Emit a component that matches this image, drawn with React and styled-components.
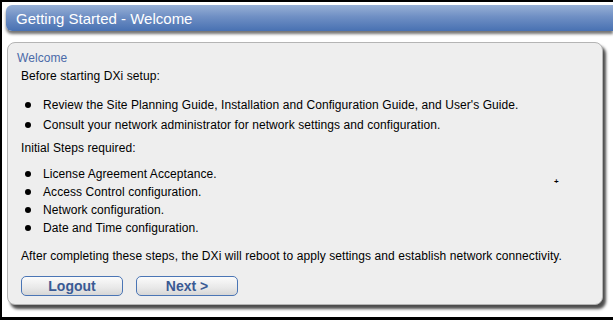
import styled, { createGlobalStyle } from "styled-components";

const GlobalStyle = createGlobalStyle`
  html, body {
    margin: 0;
    padding: 0;
    background: #000;
  }
  body {
    font-family: "Liberation Sans", Arial, sans-serif;
  }
`;

const Frame = styled.div`
  position: relative;
  width: 611px;
  height: 315px;
  margin: 2px 0 0 2px;
  background: #fff;
  overflow: hidden;
  padding-top: 3px;
  box-sizing: border-box;
`;

const Header = styled.div`
  margin-left: 4px;
  height: 26px;
  display: flex;
  align-items: center;
  padding-left: 10px;
  border-radius: 6px 0 0 6px;
  background: linear-gradient(#97b0d6, #6f8fc4 45%, #4871b2);
  box-shadow: 0 3px 3px rgba(0, 0, 0, 0.55);
  color: #fff;
  font-size: 15px;
`;

const Panel = styled.div`
  margin: 11px 0 0 5px;
  width: 596px;
  height: 263px;
  box-sizing: border-box;
  background: #eeeeee;
  border: 1px solid #b4b4b4;
  border-radius: 8px;
  box-shadow: 3px 4px 3px rgba(0, 0, 0, 0.7);
  padding: 8px 0 0 9px;
  font-size: 12px;
  letter-spacing: 0.08px;
  color: #000;
`;

const Title = styled.div`
  color: #4a6aa8;
  font-size: 12px;
  margin-bottom: 4px;
`;

const Para = styled.div`
  margin-left: 4px;
`;

const List = styled.ul`
  list-style: none;
  margin: ${(p) => p.$top}px 0 ${(p) => p.$bottom}px 0;
  padding: 0 0 0 8px;
`;

const Item = styled.li`
  display: flex;
  align-items: center;
  height: ${(p) => p.$h || 18}px;

  &::before {
    content: "";
    width: 6px;
    height: 6px;
    border-radius: 50%;
    background: #000;
    margin-right: 12px;
  }
`;

const Buttons = styled.div`
  display: flex;
  gap: 13px;
  margin: 13px 0 0 4px;
`;

const Button = styled.button`
  width: 102px;
  height: 20px;
  border: 1px solid #4a75b5;
  border-radius: 5px;
  background: linear-gradient(#fbfbfb, #e8e8e8 60%, #d6d6d6);
  color: #3a5a94;
  font-family: "Liberation Sans", Arial, sans-serif;
  font-weight: bold;
  font-size: 14px;
  padding: 0;
`;

const Cursor = styled.div`
  position: absolute;
  left: 552px;
  top: 175px;
  font-size: 8px;
  font-weight: bold;
  color: #000;
`;

export default function App() {
  return (
    <>
      <GlobalStyle />
      <Frame>
        <Header>Getting Started - Welcome</Header>
        <Panel>
          <Title>Welcome</Title>
          <Para>Before starting DXi setup:</Para>
          <List $top={12} $bottom={6}>
            <Item $h={20}>
              Review the Site Planning Guide, Installation and Configuration Guide, and User's Guide.
            </Item>
            <Item $h={20}>
              Consult your network administrator for network settings and configuration.
            </Item>
          </List>
          <Para>Initial Steps required:</Para>
          <List $top={10} $bottom={12}>
            <Item>License Agreement Acceptance.</Item>
            <Item>Access Control configuration.</Item>
            <Item>Network configuration.</Item>
            <Item>Date and Time configuration.</Item>
          </List>
          <Para>
            After completing these steps, the DXi will reboot to apply settings and establish network connectivity.
          </Para>
          <Buttons>
            <Button>Logout</Button>
            <Button>Next &gt;</Button>
          </Buttons>
        </Panel>
        <Cursor>+</Cursor>
      </Frame>
    </>
  );
}
